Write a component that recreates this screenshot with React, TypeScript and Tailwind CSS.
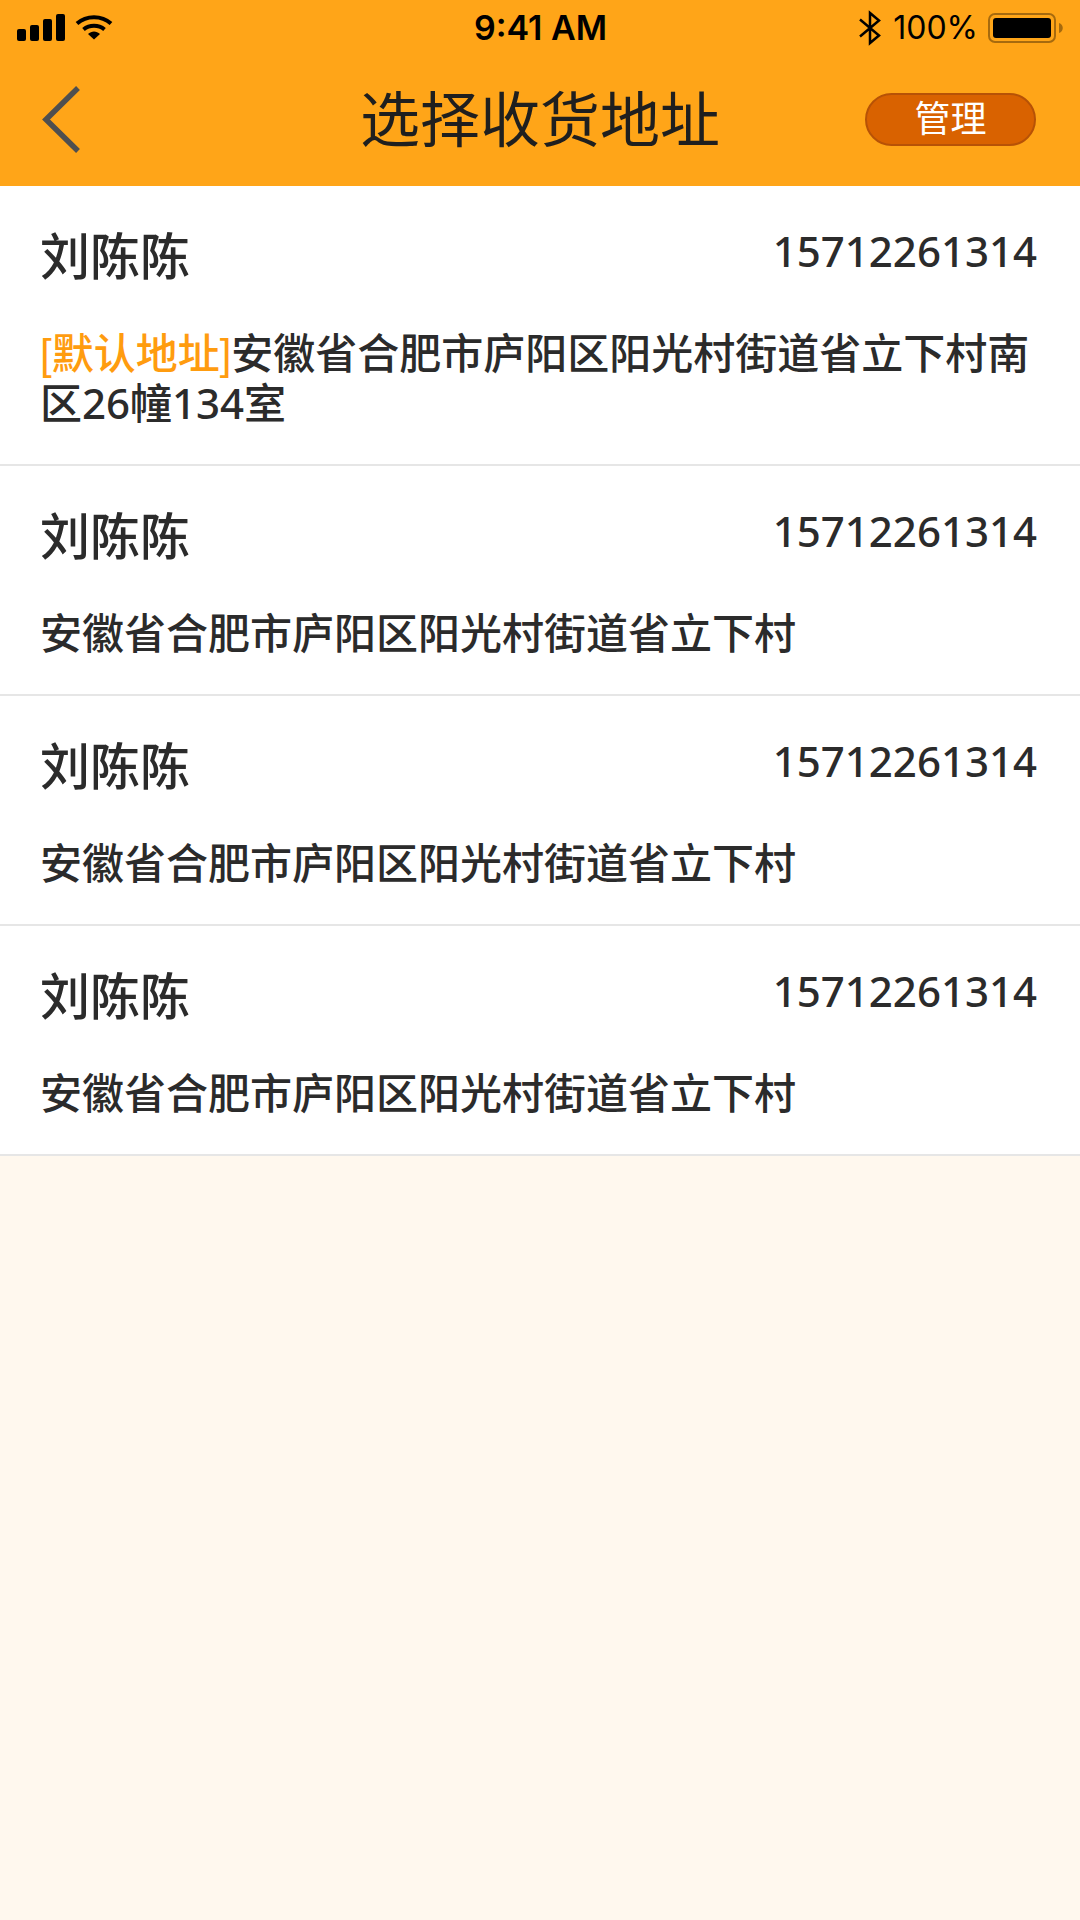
import React from "react";

interface Address {
  id: number;
  name: string;
  phone: string;
  detail: string;
  isDefault?: boolean;
}

const addresses: Address[] = [
  {
    id: 1,
    name: "刘陈陈",
    phone: "15712261314",
    detail: "安徽省合肥市庐阳区阳光村街道省立下村南区26幢134室",
    isDefault: true,
  },
  {
    id: 2,
    name: "刘陈陈",
    phone: "15712261314",
    detail: "安徽省合肥市庐阳区阳光村街道省立下村",
  },
  {
    id: 3,
    name: "刘陈陈",
    phone: "15712261314",
    detail: "安徽省合肥市庐阳区阳光村街道省立下村",
  },
  {
    id: 4,
    name: "刘陈陈",
    phone: "15712261314",
    detail: "安徽省合肥市庐阳区阳光村街道省立下村",
  },
];

const SignalIcon = () => (
  <svg width="48" height="28" viewBox="0 0 48 28" aria-hidden="true">
    <rect x="0" y="15" width="9" height="12" rx="2" />
    <rect x="13" y="11" width="9" height="16" rx="2" />
    <rect x="26" y="5" width="9" height="22" rx="2" />
    <rect x="39" y="0" width="9" height="27" rx="2" />
  </svg>
);

const WifiIcon = () => (
  <svg width="38" height="28" viewBox="0 0 38 28" fill="none" aria-hidden="true">
    <path d="M2 9.500C11.500 1 26.500 1 36 9.500" stroke="#000" strokeWidth="4" />
    <path d="M8.500 15.500C14.500 10.500 23.500 10.500 29.500 15.500" stroke="#000" strokeWidth="4" />
    <path d="M13 20C16.500 16.500 21.500 16.500 25 20L19 25.500Z" fill="#000" />
  </svg>
);

const BluetoothIcon = () => (
  <svg width="22" height="36" viewBox="0 0 22 36" fill="none" aria-hidden="true">
    <path
      d="M1 9.500L20 25.500L11 33V3L20 10.500L1 26.500"
      stroke="#000"
      strokeWidth="2.500"
    />
  </svg>
);

const BatteryIcon = () => (
  <svg width="76" height="30" viewBox="0 0 76 30" aria-hidden="true">
    <rect
      x="1"
      y="1"
      width="66"
      height="28"
      rx="6"
      fill="none"
      stroke="#a66a0e"
      strokeWidth="2"
    />
    <rect x="5" y="5" width="58" height="20" rx="3" />
    <path d="M71 10C76 11.500 76 18.500 71 20Z" fill="#a66a0e" />
  </svg>
);

const StatusBar = () => {
  return (
    <div className="grid grid-cols-3 items-center h-14 pl-[17px] pr-4 font-['Inter',sans-serif] text-[32px] text-black">
      <div className="flex items-center gap-[10px]">
        <SignalIcon />
        <WifiIcon />
      </div>
      <span className="text-center text-[34px] leading-[48px] font-semibold">
        9:41 AM
      </span>
      <div className="flex items-center justify-end gap-[10px]">
        <div className="flex items-center gap-3">
          <BluetoothIcon />
          <span>100%</span>
        </div>
        <BatteryIcon />
      </div>
    </div>
  );
};

const AddressRow = ({ address }: { address: Address }) => {
  return (
    <li className="bg-white border-b-2 border-[#e6e6e6] px-10 pt-10 pb-9 font-medium">
      <div className="flex items-start justify-between">
        <h2 className="text-[50px] leading-[60px]">{address.name}</h2>
        <span className="text-[42px] leading-[50px] pr-[3px]">
          {address.phone}
        </span>
      </div>
      <p className="mt-[42px] text-[42px] leading-[50px]">
        {address.isDefault && (
          <span className="leading-none text-[#ff9c0f] font-['Liberation_Sans','Noto_Sans_CJK_SC',sans-serif]">
            [默认地址]
          </span>
        )}
        {address.detail}
      </p>
    </li>
  );
};

const App = () => {
  return (
    <div className="min-h-screen bg-[#fff8ee] text-[#2b2b2b] font-['Noto_Sans','Noto_Sans_CJK_SC',sans-serif]">
      <header className="bg-[#ffa518]">
        <StatusBar />
        <nav className="grid grid-cols-[1fr_auto_1fr] items-center h-[130px] px-10 pb-1">
          <button type="button" aria-label="返回" className="justify-self-start">
            <svg width="42" height="70" viewBox="0 0 42 70" fill="none" aria-hidden="true">
              <path d="M38 4L6 35.500L38 67" stroke="#4f4f4f" strokeWidth="5.500" />
            </svg>
          </button>
          <h1 className="text-[60px] leading-[72px] text-[#1f1f1f]">选择收货地址</h1>
          <button
            type="button"
            className="justify-self-end w-[171px] h-[53px] mr-1 rounded-full border-2 border-[#b75206] bg-[#d96200] text-white text-4xl leading-none"
          >
            管理
          </button>
        </nav>
      </header>

      {/* Address list */}
      <ul>
        {addresses.map((item) => (
          <AddressRow key={item.id} address={item} />
        ))}
      </ul>
    </div>
  );
};

export default App;
